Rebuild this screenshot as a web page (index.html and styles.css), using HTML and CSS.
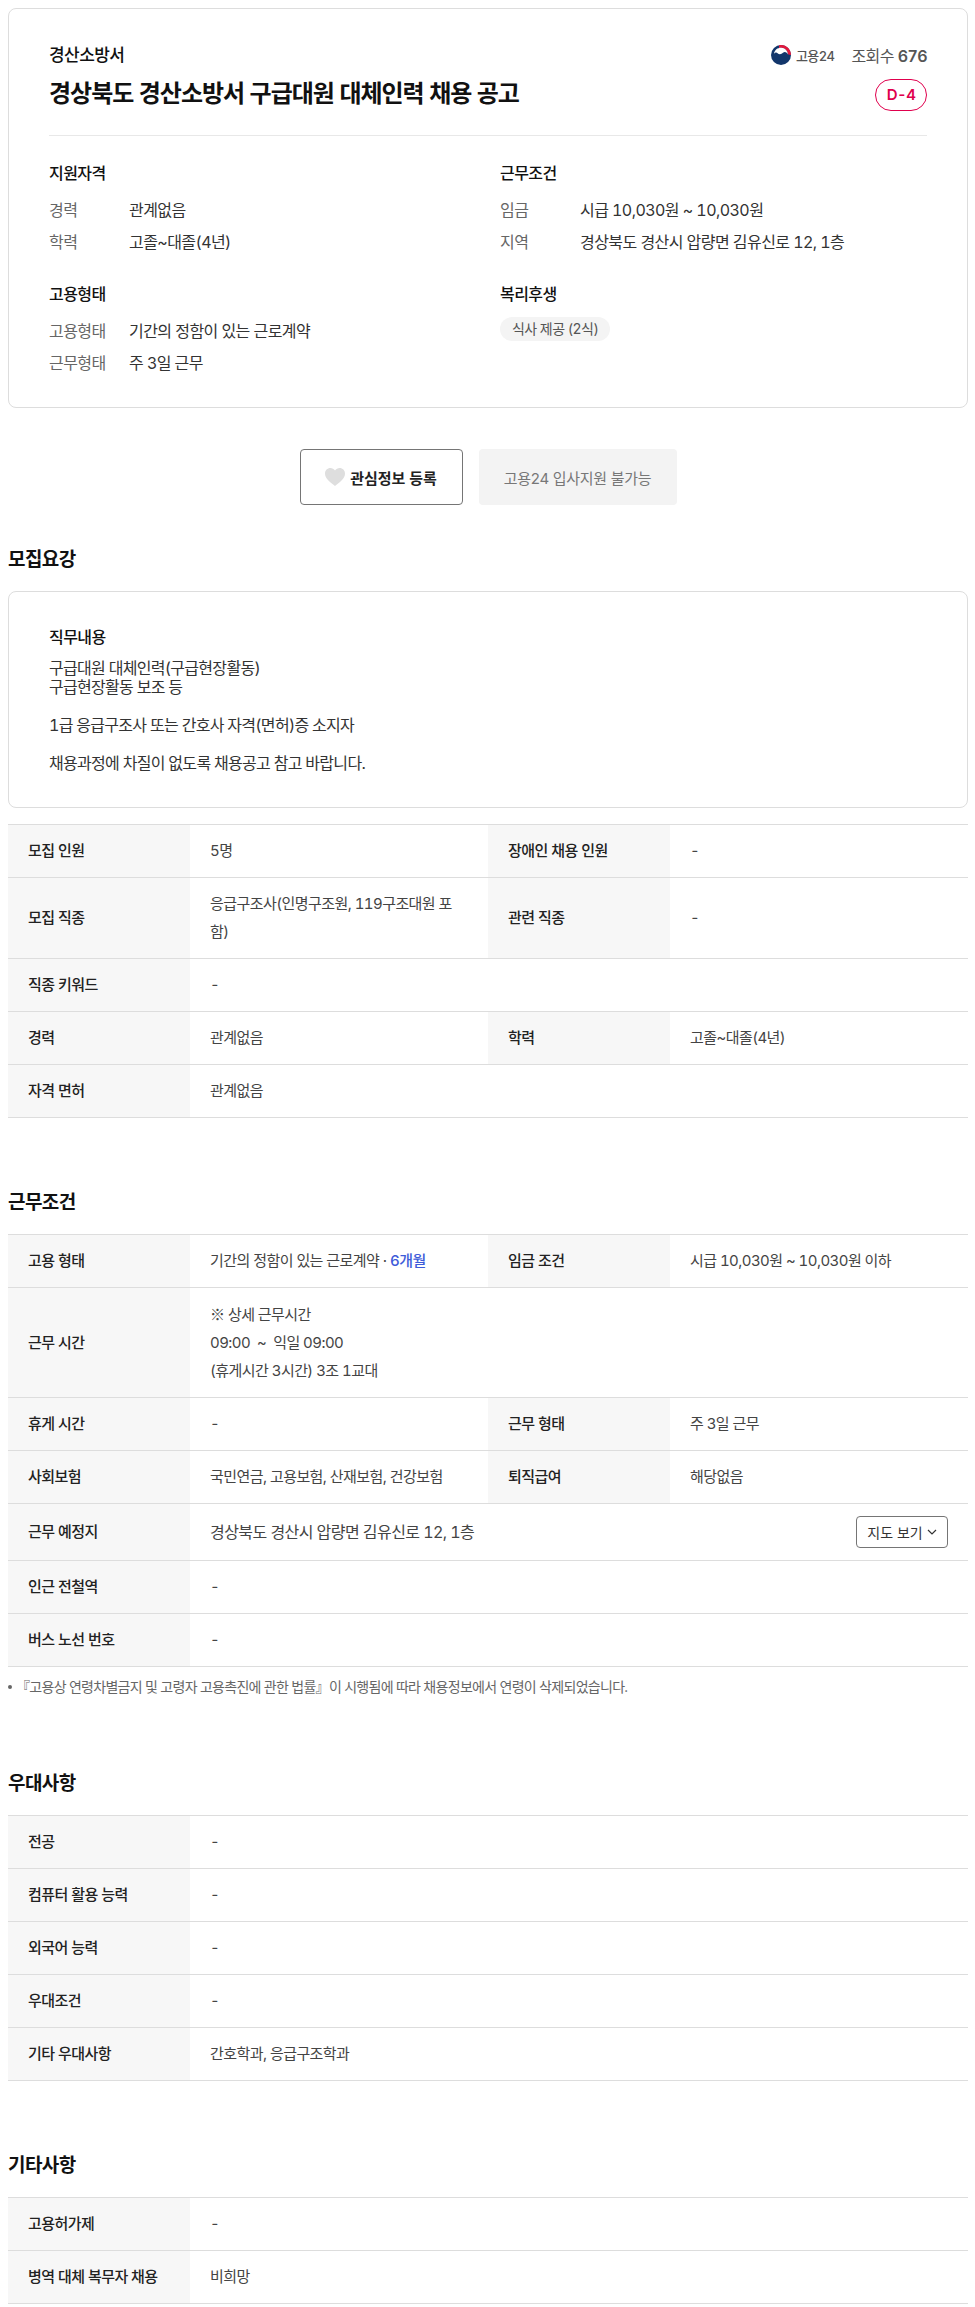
FILE: index.html
```html
<!DOCTYPE html>
<html lang="ko">

<head>
    <meta charset="UTF-8">
    <title>경상북도 경산소방서 구급대원 대체인력 채용 공고</title>
    <link rel="stylesheet" href="styles.css">
</head>

<body>
    <div class="card summary">
        <div class="summary-head">
            <div>
                <p class="company">경산소방서</p>
                <h1 class="job-title">경상북도 경산소방서 구급대원 대체인력 채용 공고</h1>
            </div>
            <div class="head-side">
                <div class="head-meta">
                    <svg class="logo" viewBox="0 0 20 20" aria-hidden="true">
                        <circle cx="10" cy="10" r="10" fill="#12366b"/>
                        <path d="M8 .2A10 10 0 0 1 20 10L17.2 9.4A7.4 7.4 0 0 0 8 3Z" fill="#e2183d"/>
                        <path d="M3 9C3.4 4.6 7 2.6 10.4 2.8 14 3 16.6 5.6 17 9.6 16 7 13.4 6.4 12 7.8 10.4 9.4 8 9.6 6.6 8.2 5.4 7 3.8 7.4 3 9Z" fill="#fff"/>
                    </svg>
                    <span class="logo-text">고용24</span>
                    <span class="views">조회수 <b>676</b></span>
                </div>
                <span class="dday">D-4</span>
            </div>
        </div>
        <div class="summary-grid">
            <div class="summary-block">
                <h3>지원자격</h3>
                <dl>
                    <div><dt>경력</dt><dd>관계없음</dd></div>
                    <div><dt>학력</dt><dd>고졸~대졸(4년)</dd></div>
                </dl>
            </div>
            <div class="summary-block">
                <h3>근무조건</h3>
                <dl>
                    <div><dt>임금</dt><dd>시급 10,030원 ~ 10,030원</dd></div>
                    <div><dt>지역</dt><dd>경상북도 경산시 압량면 김유신로 12, 1층</dd></div>
                </dl>
            </div>
            <div class="summary-block">
                <h3>고용형태</h3>
                <dl>
                    <div><dt>고용형태</dt><dd>기간의 정함이 있는 근로계약</dd></div>
                    <div><dt>근무형태</dt><dd>주 3일 근무</dd></div>
                </dl>
            </div>
            <div class="summary-block">
                <h3>복리후생</h3>
                <span class="chip">식사 제공 (2식)</span>
            </div>
        </div>
    </div>

    <div class="actions">
        <button class="btn btn-line">
            <svg class="heart" viewBox="0 0 20 18" aria-hidden="true">
                <path d="M10 18C4 13.4 0 10.2 0 5.6 0 2.4 2.4 0 5.4 0 7.2 0 9 .9 10 2.4 11 .9 12.8 0 14.6 0 17.6 0 20 2.4 20 5.6 20 10.2 16 13.4 10 18Z" fill="#dedede"/>
            </svg>
            관심정보 등록
        </button>
        <button class="btn btn-off">고용24 입사지원 불가능</button>
    </div>

    <h2 class="section-title first">모집요강</h2>
    <div class="card duty">
        <h3>직무내용</h3>
        <p class="duty-text">구급대원 대체인력(구급현장활동)
구급현장활동 보조 등

1급 응급구조사 또는 간호사 자격(면허)증 소지자

채용과정에 차질이 없도록 채용공고 참고 바랍니다.</p>
    </div>
    <table class="info after-card">
        <colgroup><col class="col-th"><col class="col-td"><col class="col-th"><col></colgroup>
        <tr><th>모집 인원</th><td>5명</td><th>장애인 채용 인원</th><td>-</td></tr>
        <tr><th>모집 직종</th><td>응급구조사(인명구조원, 119구조대원 포함)</td><th>관련 직종</th><td>-</td></tr>
        <tr><th>직종 키워드</th><td colspan="3">-</td></tr>
        <tr><th>경력</th><td>관계없음</td><th>학력</th><td>고졸~대졸(4년)</td></tr>
        <tr><th>자격 면허</th><td colspan="3">관계없음</td></tr>
    </table>

    <h2 class="section-title">근무조건</h2>
    <table class="info">
        <colgroup><col class="col-th"><col class="col-td"><col class="col-th"><col></colgroup>
        <tr><th>고용 형태</th><td>기간의 정함이 있는 근로계약 · <em>6개월</em></td><th>임금 조건</th><td>시급 10,030원 ~ 10,030원 이하</td></tr>
        <tr><th>근무 시간</th><td colspan="3"><span class="mark">※</span> 상세 근무시간<br>09:00 &nbsp;~&nbsp; 익일 09:00<br>(휴게시간 3시간) 3조 1교대</td></tr>
        <tr><th>휴게 시간</th><td>-</td><th>근무 형태</th><td>주 3일 근무</td></tr>
        <tr><th>사회보험</th><td>국민연금, 고용보험, 산재보험, 건강보험</td><th>퇴직급여</th><td>해당없음</td></tr>
        <tr>
            <th>근무 예정지</th>
            <td colspan="3">
                <div class="place">
                    <span class="place-name">경상북도 경산시 압량면 김유신로 12, 1층</span>
                    <button class="btn-map">지도 보기
                        <svg class="chev" viewBox="0 0 10 6" aria-hidden="true"><path d="M1 1l4 4 4-4" fill="none" stroke="#333" stroke-width="1.2"/></svg>
                    </button>
                </div>
            </td>
        </tr>
        <tr><th>인근 전철역</th><td colspan="3">-</td></tr>
        <tr><th>버스 노선 번호</th><td colspan="3">-</td></tr>
    </table>
    <p class="note">『고용상 연령차별금지 및 고령자 고용촉진에 관한 법률』이 시행됨에 따라 채용정보에서 연령이 삭제되었습니다.</p>

    <h2 class="section-title wide">우대사항</h2>
    <table class="info">
        <colgroup><col class="col-th"><col></colgroup>
        <tr><th>전공</th><td>-</td></tr>
        <tr><th>컴퓨터 활용 능력</th><td>-</td></tr>
        <tr><th>외국어 능력</th><td>-</td></tr>
        <tr><th>우대조건</th><td>-</td></tr>
        <tr><th>기타 우대사항</th><td>간호학과, 응급구조학과</td></tr>
    </table>

    <h2 class="section-title">기타사항</h2>
    <table class="info">
        <colgroup><col class="col-th"><col></colgroup>
        <tr><th>고용허가제</th><td>-</td></tr>
        <tr><th>병역 대체 복무자 채용</th><td>비희망</td></tr>
    </table>

    <div class="card last-card"></div>
</body>

</html>
```

FILE: styles.css
```css
html,
body {
    height: 2307px;
    overflow: hidden;
}

body {
    margin: 0;
    padding: 8px 7px 0 8px;
    box-sizing: border-box;
    background-color: #fff;
    color: #111;
    font-family: Inter, "Noto Sans CJK KR", sans-serif;
    font-size: 16px;
    font-variant-numeric: tabular-nums;
    letter-spacing: -0.035em;
}

h1,
h2,
h3,
p,
dl,
dd {
    margin: 0;
}

.card {
    border: 1px solid #ddd;
    border-radius: 8px;
    background-color: #fff;
}

.summary {
    height: 400px;
    box-sizing: border-box;
    padding: 32px 40px 0;
}

.summary-head {
    display: flex;
    justify-content: space-between;
    height: 94px;
    border-bottom: 1px solid #e8e8e8;
}

.company {
    font-size: 17px;
    font-weight: 500;
    line-height: 28px;
}

.job-title {
    margin-top: 11px;
    font-size: 24px;
    font-weight: 600;
    letter-spacing: -1px;
    line-height: 28px;
}

.head-side {
    display: flex;
    flex-direction: column;
    align-items: flex-end;
}

.head-meta {
    display: flex;
    align-items: center;
    height: 28px;
}

.logo {
    width: 20px;
    height: 20px;
    margin-right: 5px;
}

.logo-text {
    margin-right: 17px;
    color: #555;
    font-size: 13px;
    font-weight: 500;
}

.views {
    color: #555;
    font-size: 16px;
}

.views b {
    font-weight: 600;
}

.dday {
    box-sizing: border-box;
    width: 52px;
    height: 32px;
    margin-top: 10px;
    border: 1px solid #e0004d;
    border-radius: 16px;
    color: #e0004d;
    font-size: 15px;
    font-weight: 600;
    line-height: 30px;
    text-align: center;
}

.summary-grid {
    display: grid;
    grid-template-columns: 451px 1fr;
    row-gap: 26px;
    padding-top: 26px;
}

.summary-block h3 {
    font-size: 16px;
    font-weight: 500;
    line-height: 22px;
}

.summary-block dl {
    margin-top: 9px;
}

.summary-block dl div {
    display: flex;
    height: 32px;
    align-items: center;
}

.summary-block dt {
    width: 80px;
    color: #666;
}

.summary-block dd {
    color: #333;
}

.chip {
    display: inline-block;
    height: 24px;
    margin-top: 12px;
    padding: 0 12px;
    border-radius: 12px;
    background-color: #f4f4f4;
    color: #555;
    font-size: 14px;
    line-height: 24px;
}

.actions {
    display: flex;
    justify-content: center;
    gap: 16px;
    margin-top: 41px;
}

.btn {
    box-sizing: border-box;
    height: 56px;
    border-radius: 4px;
    font-family: inherit;
    font-size: 15px;
}

.btn-line {
    display: flex;
    align-items: center;
    justify-content: center;
    gap: 5px;
    width: 163px;
    border: 1px solid #757575;
    background-color: #fff;
    color: #222;
    font-weight: 600;
}

.heart {
    width: 20px;
    height: 18px;
}

.btn-off {
    width: 198px;
    border: none;
    background-color: #f3f3f3;
    color: #777;
    letter-spacing: -0.3px;
}

.section-title {
    margin: 71px 0 17px;
    font-size: 19px;
    font-weight: 600;
    line-height: 28px;
}

.section-title.first {
    margin-top: 41px;
}

.section-title.wide {
    margin-top: 73px;
}

.duty {
    box-sizing: border-box;
    height: 217px;
    padding: 33px 40px 0;
}

.duty h3 {
    font-size: 16px;
    font-weight: 500;
    line-height: 24px;
}

.duty-text {
    margin-top: 10px;
    color: #333;
    letter-spacing: -0.7px;
    line-height: 19px;
    white-space: pre-wrap;
}

.info {
    width: 100%;
    border-collapse: collapse;
    table-layout: fixed;
    border-top: 1px solid #ddd;
}

.info.after-card {
    margin-top: 16px;
}

.col-th {
    width: 182px;
}

.col-td {
    width: 298px;
}

.info tr {
    border-bottom: 1px solid #ddd;
}

.info th,
.info td {
    padding: 12px 20px;
    line-height: 28px;
    font-size: 15px;
    text-align: left;
}

.info th {
    background-color: #f7f7f7;
    color: #222;
    font-weight: 500;
}

.info td {
    color: #444;
}

.info em {
    color: #3d5bd9;
    font-style: normal;
    font-weight: 500;
}

.mark {
    font-family: "Noto Sans CJK KR", sans-serif;
}

.place {
    display: flex;
    align-items: center;
    justify-content: space-between;
}

.place-name {
    font-size: 16px;
}

.btn-map {
    display: flex;
    align-items: center;
    justify-content: center;
    gap: 4px;
    box-sizing: border-box;
    width: 92px;
    height: 32px;
    padding: 0;
    border: 1px solid #757575;
    border-radius: 4px;
    background-color: #fff;
    color: #333;
    font-family: inherit;
    font-size: 14px;
}

.chev {
    width: 10px;
    height: 6px;
}

.note {
    position: relative;
    margin-top: 10px;
    padding-left: 8px;
    color: #666;
    font-size: 14px;
    letter-spacing: -0.7px;
    line-height: 20px;
}

.note::before {
    content: "";
    position: absolute;
    top: 8px;
    left: 0;
    width: 4px;
    height: 4px;
    border-radius: 50%;
    background-color: #666;
}

.last-card {
    height: 60px;
    margin-top: 16px;
}
```
